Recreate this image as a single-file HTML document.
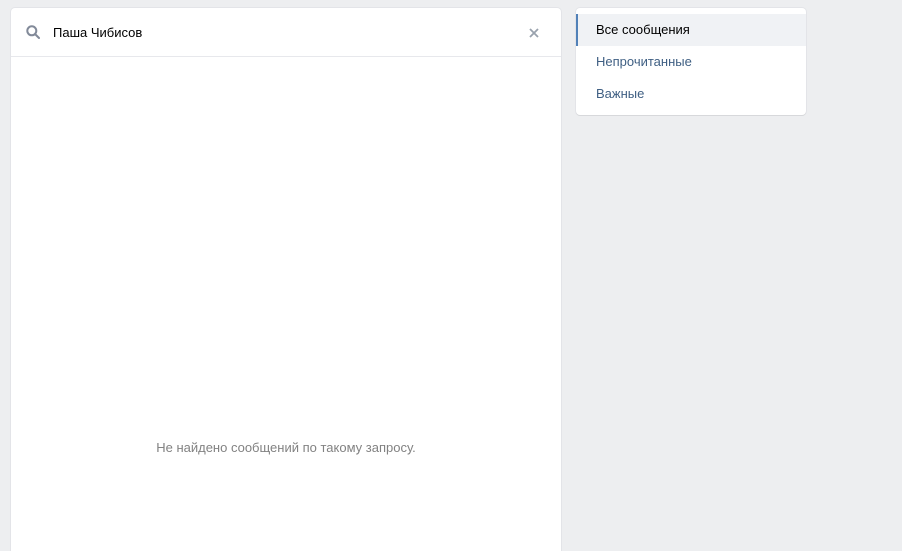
<!DOCTYPE html>
<html style="overflow:hidden;height:551px"><head><meta charset="utf-8"><style>
body{margin:0;width:902px;height:551px;background:#edeef0;font-family:"Liberation Sans",sans-serif;font-size:13px;overflow:hidden;position:relative}
.left{position:absolute;left:11px;top:8px;width:550px;height:548px;background:#fff;border-radius:4px;box-shadow:0 1px 0 0 #d7d8db,0 0 0 1px #e3e4e8}
.hdr{height:48px;border-bottom:1px solid #e7e8ec;position:relative}
.q{position:absolute;left:42px;top:17px;color:#000}
.empty{position:absolute;top:432px;left:0;width:550px;text-align:center;color:#828282}
.right{position:absolute;left:576px;top:8px;width:230px;height:107px;background:#fff;border-radius:4px;box-shadow:0 1px 0 0 #d7d8db,0 0 0 1px #e3e4e8}
.it{height:32px;line-height:32px;padding-left:20px;color:#3f5f83}
.it.a{background:#f0f2f5;color:#000;border-left:2px solid #5181b8;padding-left:18px;margin-top:6px}
</style></head><body>
<div class="left"><div class="hdr">
<svg style="position:absolute;left:15px;top:17px" width="14" height="14" viewBox="0 0 14 14"><circle cx="5.8" cy="5.8" r="4.5" fill="none" stroke="#828a99" stroke-width="2"/><path d="M9 9l4 4" stroke="#828a99" stroke-width="2" stroke-linecap="round"/></svg>
<div class="q">Паша Чибисов</div>
<svg style="position:absolute;left:518px;top:20px" width="10" height="10" viewBox="0 0 10 10"><path d="M1 1l8 8M9 1l-8 8" stroke="#99a2ad" stroke-width="1.8"/></svg>
</div>
<div class="empty">Не найдено сообщений по такому запросу.</div>
</div>
<div class="right">
<div class="it a">Все сообщения</div>
<div class="it">Непрочитанные</div>
<div class="it">Важные</div>
</div>
</body></html>
